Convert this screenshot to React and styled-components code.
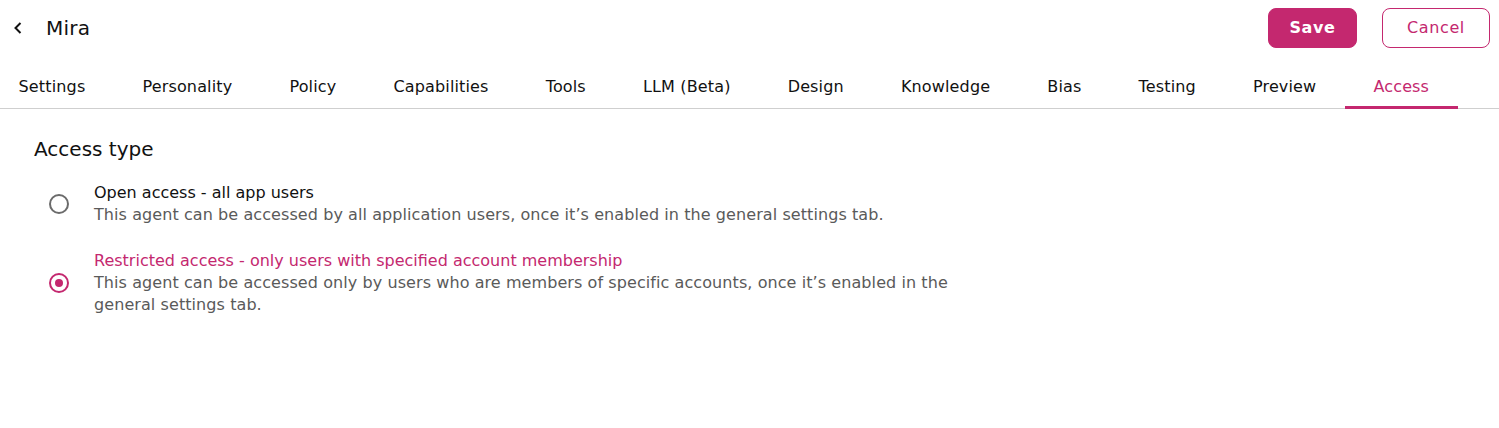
import React, { useState } from "react";
import styled, { createGlobalStyle } from "styled-components";

const PINK = "#c4286f";
const FONT = `"DejaVu Sans", "Noto Sans", sans-serif`;

const Global = createGlobalStyle`
  html, body { margin: 0; padding: 0; background: #fff; }
  body { font-family: ${FONT}; color: #111; overflow: hidden; }
  * { box-sizing: border-box; }
`;

const Page = styled.div`
  width: 1499px;
  height: 428px;
  display: flex;
  flex-direction: column;
`;

const Header = styled.header`
  height: 56px;
  display: flex;
  align-items: center;
  padding: 0 9px 1px 9px;
`;

const BackButton = styled.button`
  width: 18px;
  height: 24px;
  display: flex;
  align-items: center;
  justify-content: center;
  border: none;
  background: none;
  padding: 0;
  margin-right: 19px;
  cursor: pointer;
  color: #111;
`;

const Title = styled.h1`
  margin: 0;
  font-size: 20px;
  font-weight: 400;
  letter-spacing: 0.2px;
  flex: 1;
`;

const Button = styled.button`
  height: 40px;
  font-family: ${FONT};
  font-size: 16px;
  border-radius: 8px;
  cursor: pointer;
  letter-spacing: 0.6px;
  border: 1px solid ${PINK};
  background: ${(p) => (p.$primary ? PINK : "#fff")};
  color: ${(p) => (p.$primary ? "#fff" : PINK)};
  font-weight: ${(p) => (p.$primary ? 600 : 400)};
  width: ${(p) => p.$w}px;
  margin-left: ${(p) => p.$ml || 0}px;
`;

const TabBar = styled.nav`
  height: 53px;
  display: flex;
  align-items: stretch;
  border-bottom: 1px solid #cfcfcf;
  margin-left: -10px;
`;

const Tab = styled.div`
  position: relative;
  padding: 8px 28.55px 0;
  display: flex;
  align-items: center;
  font-size: 16px;
  letter-spacing: 0.15px;
  color: ${(p) => (p.$active ? PINK : "#111")};
  cursor: pointer;
  white-space: nowrap;
  &::after {
    content: "";
    position: absolute;
    left: 0;
    right: 0;
    bottom: -1px;
    height: 3px;
    background: ${(p) => (p.$active ? PINK : "transparent")};
  }
`;

const Content = styled.section`
  padding: 26px 34px;
`;

const SectionTitle = styled.h2`
  margin: 0 0 19px 0;
  font-size: 20px;
  font-weight: 400;
  line-height: 28px;
`;

const OptionList = styled.div`
  display: flex;
  flex-direction: column;
  gap: 24px;
  padding-left: 14px;
`;

const Option = styled.label`
  display: flex;
  align-items: center;
  gap: 25px;
  cursor: pointer;
`;

const Radio = styled.span`
  width: 20px;
  height: 20px;
  border-radius: 50%;
  border: 2px solid ${(p) => (p.$checked ? PINK : "#6b6b6b")};
  display: flex;
  align-items: center;
  justify-content: center;
  flex-shrink: 0;
  margin-left: 1px;
  &::before {
    content: "";
    width: 8px;
    height: 8px;
    border-radius: 50%;
    background: ${(p) => (p.$checked ? PINK : "transparent")};
  }
`;

const OptionText = styled.div`
  display: flex;
  flex-direction: column;
  max-width: 880px;
`;

const OptionTitle = styled.div`
  font-size: 16px;
  font-weight: 500;
  line-height: 22px;
  color: ${(p) => (p.$checked ? PINK : "#111")};
`;

const OptionDesc = styled.div`
  font-size: 16px;
  line-height: 22px;
  letter-spacing: 0.08px;
  color: #5a5a5a;
`;

const tabs = [
  "Settings",
  "Personality",
  "Policy",
  "Capabilities",
  "Tools",
  "LLM (Beta)",
  "Design",
  "Knowledge",
  "Bias",
  "Testing",
  "Preview",
  "Access",
];

const options = [
  {
    id: "open",
    title: "Open access - all app users",
    desc: "This agent can be accessed by all application users, once it’s enabled in the general settings tab.",
  },
  {
    id: "restricted",
    title: "Restricted access - only users with specified account membership",
    desc: "This agent can be accessed only by users who are members of specific accounts, once it’s enabled in the general settings tab.",
  },
];

export default function App() {
  const [selected, setSelected] = useState("restricted");
  return (
    <Page>
      <Global />
      <Header>
        <BackButton aria-label="Back">
          <svg width="10" height="14" viewBox="0 0 10 14" fill="none">
            <path d="M7.5 2 L2.5 7 L7.5 12" stroke="#111" strokeWidth="2" />
          </svg>
        </BackButton>
        <Title>Mira</Title>
        <Button $primary $w={89}>Save</Button>
        <Button $w={108} $ml={25}>Cancel</Button>
      </Header>
      <TabBar>
        {tabs.map((t) => (
          <Tab key={t} $active={t === "Access"}>
            {t}
          </Tab>
        ))}
      </TabBar>
      <Content>
        <SectionTitle>Access type</SectionTitle>
        <OptionList>
          {options.map((o) => (
            <Option key={o.id} onClick={() => setSelected(o.id)}>
              <Radio $checked={selected === o.id} />
              <OptionText>
                <OptionTitle $checked={selected === o.id}>{o.title}</OptionTitle>
                <OptionDesc>{o.desc}</OptionDesc>
              </OptionText>
            </Option>
          ))}
        </OptionList>
      </Content>
    </Page>
  );
}
